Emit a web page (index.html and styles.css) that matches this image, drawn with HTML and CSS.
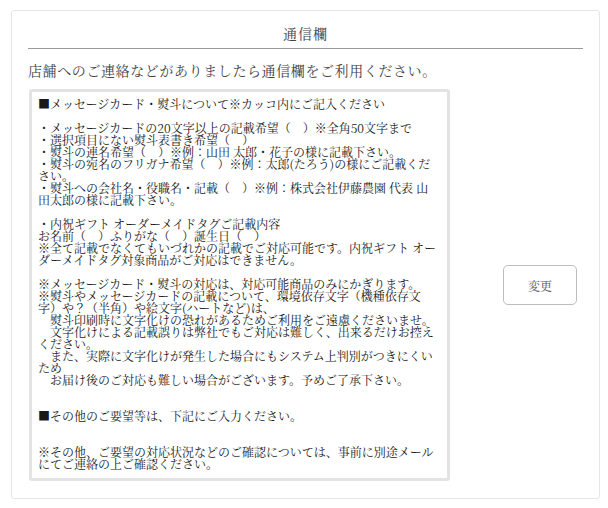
FILE: index.html
```html
<!DOCTYPE html>
<html lang="ja">
<head>
<meta charset="utf-8">
<title>通信欄</title>
<link rel="stylesheet" href="styles.css">
</head>
<body>
<section class="card">
  <h2 class="card-title">通信欄</h2>
  <p class="card-desc">店舗へのご連絡などがありましたら通信欄をご利用ください。</p>
  <div class="row">
    <textarea class="memo" readonly>■メッセージカード・熨斗について※カッコ内にご記入ください

・メッセージカードの20文字以上の記載希望（　）※全角50文字まで
・選択項目にない熨斗表書き希望（　）
・熨斗の連名希望（　）※例：山田 太郎・花子の様に記載下さい。
・熨斗の宛名のフリガナ希望（　）※例：太郎(たろう)の様にご記載くだ
さい。
・熨斗への会社名・役職名・記載（　）※例：株式会社伊藤農園 代表 山
田太郎の様に記載下さい。

・内祝ギフト オーダーメイドタグご記載内容
お名前（　）ふりがな（　）誕生日（　）
※全て記載でなくてもいづれかの記載でご対応可能です。内祝ギフト オー
ダーメイドタグ対象商品がご対応はできません。

※メッセージカード・熨斗の対応は、対応可能商品のみにかぎります。
※熨斗やメッセージカードの記載について、環境依存文字（機種依存文
字）や？（半角）や絵文字(ハートなど)は、
　熨斗印刷時に文字化けの恐れがあるためご利用をご遠慮くださいませ。
　文字化けによる記載誤りは弊社でもご対応は難しく、出来るだけお控え
ください。
　また、実際に文字化けが発生した場合にもシステム上判別がつきにくい
ため
　お届け後のご対応も難しい場合がございます。予めご了承下さい。


■その他のご要望等は、下記にご入力ください。


※その他、ご要望の対応状況などのご確認については、事前に別途メール
にてご連絡の上ご確認ください。</textarea>
    <button class="btn" type="button">変更</button>
  </div>
</section>
</body>
</html>
```

FILE: styles.css
```css
html, body {
  margin: 0;
  padding: 0;
  background: #ffffff;
}

body {
  font-family: "Noto Serif CJK JP", "Liberation Serif", "Noto Sans CJK JP", serif;
  color: #333333;
}

.card {
  box-sizing: border-box;
  width: 589px;
  margin: 10px 0 0 11px;
  padding: 12px 16px 17px 16px;
  border: 1px solid #e6e6e6;
  border-radius: 3px;
  background: #ffffff;
}

.card-title {
  margin: 0;
  padding: 0 0 5px 0;
  font-size: 14px;
  font-weight: normal;
  line-height: 20px;
  letter-spacing: 1px;
  text-align: center;
  color: #444444;
  border-bottom: 1px solid #9a9a9a;
}

.card-desc {
  margin: 11px 0 9px 0;
  font-size: 14px;
  line-height: 20px;
  letter-spacing: 0.6px;
  color: #444444;
}

.row {
  display: flex;
  align-items: center;
  justify-content: space-between;
}

.memo {
  box-sizing: border-box;
  display: block;
  width: 421px;
  height: 392px;
  margin: 0 0 0 1px;
  padding: 6px 3px 6px 6px;
  border: 3px solid #e3e3e3;
  border-radius: 3px;
  font-family: "Noto Serif CJK JP", "Liberation Serif", "Noto Sans CJK JP", serif;
  font-size: 12px;
  line-height: 12px;
  color: #1a1a1a;
  background: #ffffff;
  white-space: pre-wrap;
  overflow: hidden;
  resize: none;
  outline: none;
}

.btn {
  box-sizing: border-box;
  width: 74px;
  height: 40px;
  margin-right: 6px;
  padding: 0;
  border: 1px solid #bdbdbd;
  border-radius: 5px;
  background: #ffffff;
  font-family: "Noto Serif CJK JP", "Liberation Serif", "Noto Sans CJK JP", serif;
  font-size: 12px;
  color: #555555;
  cursor: pointer;
}
```
